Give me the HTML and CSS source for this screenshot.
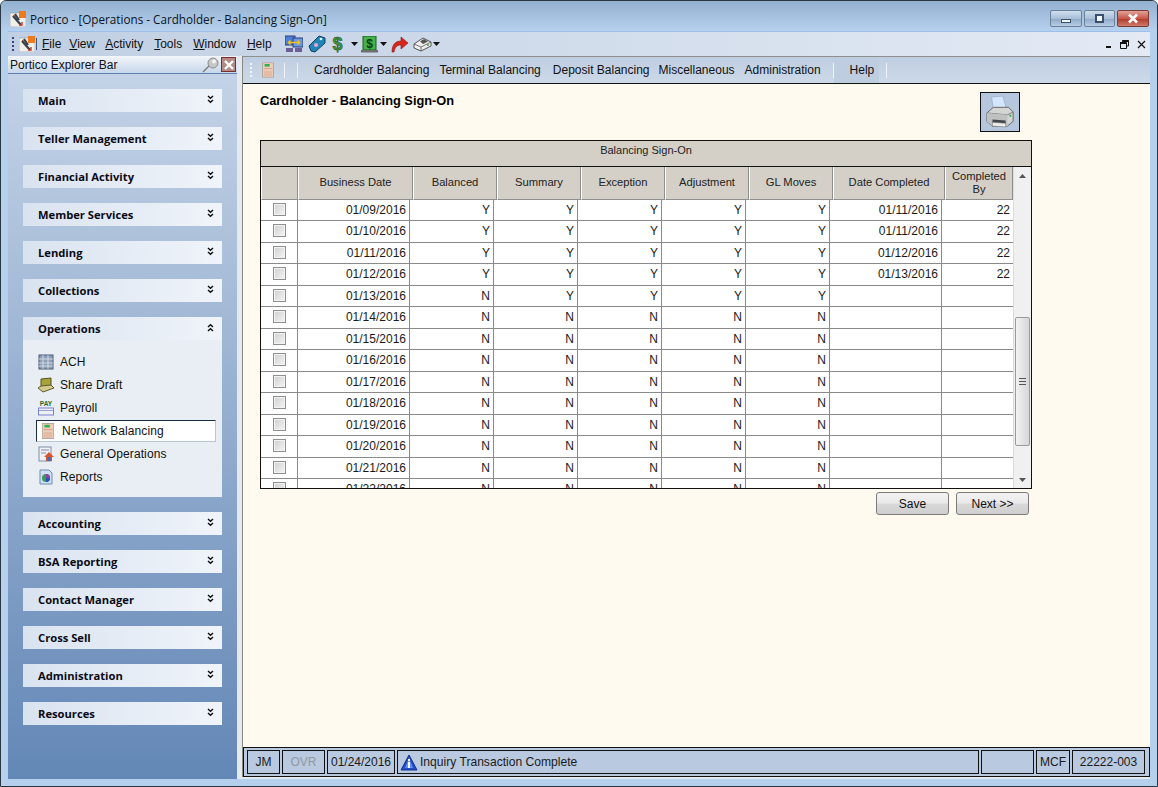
FILE: index.html
```html
<!DOCTYPE html>
<html lang="en">
<head>
<meta charset="utf-8">
<title>Portico</title>
<link rel="stylesheet" href="styles.css">
</head>
<body>
<svg class="defs" width="0" height="0" aria-hidden="true">
  <defs>
    <symbol id="logo" viewBox="0 0 16 16">
      <rect x="0" y="2" width="16" height="14" fill="#f2efe8"/>
      <rect x="0" y="2" width="16" height="14" fill="none" stroke="#8a97aa" stroke-width=".6"/>
      <rect x="9" y="0" width="7" height="7" fill="#f07a1a"/>
      <rect x="3" y="4" width="3" height="3" fill="#e9872c"/>
      <path d="M3 5 L11 14 M5 3 L9 9" stroke="#39404f" stroke-width="2.2" fill="none"/>
      <path d="M9 14 L12 14 L12 11" stroke="#c0392b" stroke-width="1.4" fill="none"/>
    </symbol>
    <symbol id="file" viewBox="0 0 14 18">
      <rect x=".5" y=".5" width="13" height="17" fill="#f0cdbb" stroke="#a9a39a"/>
      <rect x="3" y="2" width="6" height="3" fill="#2fb34a"/>
      <rect x="2" y="7" width="10" height="1" fill="#c99b87"/>
      <rect x="2" y="10" width="10" height="7" fill="#e6bba6"/>
    </symbol>
    <symbol id="printer" viewBox="0 0 32 36">
      <path d="M7 2 L19 1 L23 15 L9 16 Z" fill="#d4e6fb" stroke="#8fa8c8" stroke-width=".7"/>
      <path d="M2 19 L9 13 L25 13 L30 18 L30 28 L24 33 L8 33 L2 28 Z" fill="#d4d6d6" stroke="#555" stroke-width=".9"/>
      <path d="M2 19 L24 21 L30 18" fill="none" stroke="#777"/>
      <path d="M2 19 L24 21 L24 33 L8 33 L2 28 Z" fill="#bfc1c1"/>
      <path d="M8 26 L22 27 L22 31 L8 30 Z" fill="#44474a"/>
      <path d="M8 29 L22 30 L22 34 L8 33 Z" fill="#ededed" stroke="#666" stroke-width=".5"/>
      <rect x="26" y="21" width="2" height="2" fill="#38a84b"/>
    </symbol>
    <symbol id="caret" viewBox="0 0 7 4"><path d="M0 0 H7 L3.5 4 Z" fill="#111"/></symbol>
    <symbol id="chev-down" viewBox="0 0 7 9"><path d="M1 1 L3.5 3.2 L6 1 M1 5 L3.5 7.2 L6 5" fill="none" stroke="#111" stroke-width="1.5"/></symbol>
    <symbol id="chev-up" viewBox="0 0 7 9"><path d="M1 4 L3.5 1.8 L6 4 M1 8 L3.5 5.8 L6 8" fill="none" stroke="#111" stroke-width="1.5"/></symbol>
  </defs>
</svg>

<div class="window">
  <header class="titlebar">
    <svg class="logo-title"><use href="#logo"/></svg>
    <span class="title-text">Portico - [Operations - Cardholder - Balancing Sign-On]</span>
    <div class="caption-buttons">
      <span class="cap cap-min"><i></i></span>
      <span class="cap cap-max"><i></i></span>
      <span class="cap cap-close">
        <svg width="12" height="11" viewBox="0 0 12 11"><path d="M2 1.5 L10 9.5 M10 1.5 L2 9.5" stroke="#fff" stroke-width="2.6"/></svg>
      </span>
    </div>
  </header>

  <nav class="menubar">
    <span class="grip"></span>
    <svg class="logo-menu"><use href="#logo"/></svg>
    <span class="menu-sep"></span>
    <ul class="menu">
      <li><u>F</u>ile</li>
      <li><u>V</u>iew</li>
      <li><u>A</u>ctivity</li>
      <li><u>T</u>ools</li>
      <li><u>W</u>indow</li>
      <li><u>H</u>elp</li>
    </ul>
    <div class="tools">
      <svg class="tool tool-a" width="18" height="18" viewBox="0 0 18 18">
        <rect x="0" y="1" width="10" height="9" fill="#4f7fd6" stroke="#26407f"/>
        <rect x="8" y="3" width="10" height="9" fill="#6f97e0" stroke="#26407f"/>
        <path d="M3 7.5 H15 M3 7.5 L5.5 5.5 M3 7.5 L5.5 9.5 M15 7.5 L12.5 5.5 M15 7.5 L12.5 9.5" stroke="#f2c21c" stroke-width="1.6" fill="none"/>
        <rect x="1" y="13" width="7" height="4" fill="#6a5f96"/>
        <rect x="10" y="13" width="7" height="4" fill="#6a5f96"/>
      </svg>
      <svg class="tool tool-b" width="18" height="18" viewBox="0 0 18 18">
        <path d="M1 11 L11 1 L17 3 L17 8 L7 17 L3 16 Z" fill="#1f86b6" stroke="#123e60"/>
        <circle cx="8" cy="10" r="2" fill="#e9a3d4"/>
        <circle cx="13" cy="4" r="1.3" fill="#dff2fb"/>
      </svg>
      <span class="tool-dollar">$</span>
      <svg class="caret caret-a"><use href="#caret"/></svg>
      <svg class="tool tool-d" width="17" height="17" viewBox="0 0 17 17">
        <rect x="2" y="0" width="13" height="14" fill="#45b34a" stroke="#1f5a25"/>
        <rect x="0" y="14" width="17" height="2.5" fill="#6f6f6f"/>
        <text x="8.5" y="12" text-anchor="middle" class="svg-dollar">$</text>
      </svg>
      <svg class="caret caret-b"><use href="#caret"/></svg>
      <svg class="tool tool-e" width="17" height="17" viewBox="0 0 17 17">
        <path d="M1 16 C1 8 5 5 10 5 L10 1 L17 7 L10 13 L10 9 C6 9 4 11 3 16 Z" fill="#d8261c" stroke="#8c1410" stroke-width=".6"/>
      </svg>
      <svg class="tool tool-f" width="19" height="16" viewBox="0 0 19 16">
        <path d="M1 8 L10 2 L18 6 L18 10 L8 15 L1 12 Z" fill="#eeeeee" stroke="#555"/>
        <path d="M1 8 L8 11 L18 6 M8 11 L8 15" fill="none" stroke="#555" stroke-width=".8"/>
        <path d="M7 5.5 L11 3 L15 5.5 L10 8 Z" fill="#555"/>
        <circle cx="15" cy="9" r="1" fill="#3aa14a"/>
      </svg>
      <svg class="caret caret-c"><use href="#caret"/></svg>
    </div>
    <div class="mdi-controls">
      <span class="mdi-min"></span>
      <svg width="9" height="9" viewBox="0 0 9 9"><path d="M2.5 .5 H8.5 V6 H6.5 M.5 2.5 H6.5 V8.5 H.5 Z M2.5 .5 V2.5" fill="none" stroke="#111"/><rect x="2.5" y="0" width="6" height="2" fill="#111"/><rect x="0" y="2" width="6" height="2" fill="#111"/></svg>
      <svg width="9" height="9" viewBox="0 0 9 9"><path d="M1 1 L8 8 M8 1 L1 8" stroke="#111" stroke-width="1.2"/></svg>
    </div>
  </nav>

  <div class="workspace">
    <aside class="explorer">
      <div class="explorer-title">
        <span>Portico Explorer Bar</span>
        <svg class="pin" width="18" height="16" viewBox="0 0 18 16">
          <path d="M1 15 L7 9" stroke="#777" stroke-width="1.2"/>
          <circle cx="11" cy="6" r="5" fill="#c7c7c7" stroke="#8c8c8c"/>
          <circle cx="12" cy="4.5" r="2" fill="#f4f4f4"/>
        </svg>
        <span class="explorer-close">
          <svg width="12" height="10" viewBox="0 0 12 10"><path d="M2 1 L10 9 M10 1 L2 9" stroke="#fff" stroke-width="2.4"/></svg>
        </span>
      </div>
      <div class="groups">
        <section class="group"><h2>Main<svg class="chev"><use href="#chev-down"/></svg></h2></section>
        <section class="group"><h2>Teller Management<svg class="chev"><use href="#chev-down"/></svg></h2></section>
        <section class="group"><h2>Financial Activity<svg class="chev"><use href="#chev-down"/></svg></h2></section>
        <section class="group"><h2>Member Services<svg class="chev"><use href="#chev-down"/></svg></h2></section>
        <section class="group"><h2>Lending<svg class="chev"><use href="#chev-down"/></svg></h2></section>
        <section class="group"><h2>Collections<svg class="chev"><use href="#chev-down"/></svg></h2></section>
        <section class="group">
          <h2>Operations<svg class="chev"><use href="#chev-up"/></svg></h2>
          <ul class="group-items">
            <li>
              <svg class="item-icon" viewBox="0 0 16 16"><rect x="1" y="1" width="14" height="14" fill="#8da0b8" stroke="#4a5a70"/><path d="M1 5 H15 M1 9 H15 M1 12 H15 M5 1 V15 M10 1 V15" stroke="#dfe6ee" stroke-width=".8"/></svg>
              ACH
            </li>
            <li>
              <svg class="item-icon" viewBox="0 0 16 16"><path d="M3 2 L13 1 L13 9 L3 10 Z" fill="#a8a23a" stroke="#57531a"/><path d="M0 11 L3 9 L13 8 L16 11 L5 15 Z" fill="#d4c98e" stroke="#5f5a2e"/></svg>
              Share Draft
            </li>
            <li>
              <svg class="item-icon" viewBox="0 0 16 16"><text x="8" y="6" text-anchor="middle" class="svg-pay">PAY</text><rect x=".5" y="8" width="15" height="7" fill="#eef1fb" stroke="#7a80cc"/><rect x="1" y="10" width="14" height="1" fill="#9aa0de"/></svg>
              Payroll
            </li>
            <li class="is-active">
              <svg class="item-icon" viewBox="0 0 14 18"><use href="#file"/></svg>
              Network Balancing
            </li>
            <li>
              <svg class="item-icon" viewBox="0 0 16 16"><rect x="1" y="1" width="12" height="14" fill="#eef2f8" stroke="#7f8ea5"/><path d="M3 4 H11 M3 7 H8" stroke="#88a"/><path d="M6 11 L11 6 L16 11 L14 11 L14 15 L8 15 L8 11 Z" fill="#d8552c"/><rect x="9.5" y="11" width="3" height="4" fill="#3a6fc4"/></svg>
              General Operations
            </li>
            <li>
              <svg class="item-icon" viewBox="0 0 16 16"><path d="M2 1 H11 L14 4 V15 H2 Z" fill="#cfe0f4" stroke="#6f8db3"/><circle cx="8" cy="9" r="4" fill="#3a9a55"/><path d="M8 9 V5 A4 4 0 0 1 12 9 Z" fill="#8c3fa8"/><path d="M8 9 H12 A4 4 0 0 1 8 13 Z" fill="#2b4fb8"/></svg>
              Reports
            </li>
          </ul>
        </section>
        <section class="group"><h2>Accounting<svg class="chev"><use href="#chev-down"/></svg></h2></section>
        <section class="group"><h2>BSA Reporting<svg class="chev"><use href="#chev-down"/></svg></h2></section>
        <section class="group"><h2>Contact Manager<svg class="chev"><use href="#chev-down"/></svg></h2></section>
        <section class="group"><h2>Cross Sell<svg class="chev"><use href="#chev-down"/></svg></h2></section>
        <section class="group"><h2>Administration<svg class="chev"><use href="#chev-down"/></svg></h2></section>
        <section class="group"><h2>Resources<svg class="chev"><use href="#chev-down"/></svg></h2></section>
      </div>
    </aside>

    <main class="content">
      <div class="subbar">
        <span class="grip grip-light"></span>
        <svg class="sub-file" viewBox="0 0 14 18"><use href="#file"/></svg>
        <span class="sub-sep"></span>
        <span class="sub-sep sub-sep-b"></span>
        <ul class="submenu">
          <li>Cardholder Balancing</li>
          <li>Terminal Balancing</li>
          <li>Deposit Balancing</li>
          <li>Miscellaneous</li>
          <li>Administration</li>
        </ul>
        <span class="sub-sep sub-sep-c"></span>
        <span class="sub-help">Help</span>
        <span class="sub-sep sub-sep-d"></span>
      </div>

      <div class="page">
        <div class="page-head">
          <h1>Cardholder - Balancing Sign-On</h1>
          <button class="print" type="button" aria-label="Print"><svg width="30" height="34"><use href="#printer"/></svg></button>
        </div>

        <div class="grid-box">
          <div class="grid-caption">Balancing Sign-On</div>
          <div class="grid-main">
            <div class="grid-table">
              <div class="grid-head">
                <div></div><div>Business Date</div><div>Balanced</div><div>Summary</div><div>Exception</div><div>Adjustment</div><div>GL Moves</div><div>Date Completed</div><div>Completed By</div>
              </div>
              <div class="grid-body">
                <div class="row"><div class="c"><i class="check"></i></div><div>01/09/2016</div><div>Y</div><div>Y</div><div>Y</div><div>Y</div><div>Y</div><div>01/11/2016</div><div>22</div></div>
                <div class="row"><div class="c"><i class="check"></i></div><div>01/10/2016</div><div>Y</div><div>Y</div><div>Y</div><div>Y</div><div>Y</div><div>01/11/2016</div><div>22</div></div>
                <div class="row"><div class="c"><i class="check"></i></div><div>01/11/2016</div><div>Y</div><div>Y</div><div>Y</div><div>Y</div><div>Y</div><div>01/12/2016</div><div>22</div></div>
                <div class="row"><div class="c"><i class="check"></i></div><div>01/12/2016</div><div>Y</div><div>Y</div><div>Y</div><div>Y</div><div>Y</div><div>01/13/2016</div><div>22</div></div>
                <div class="row"><div class="c"><i class="check"></i></div><div>01/13/2016</div><div>N</div><div>Y</div><div>Y</div><div>Y</div><div>Y</div><div></div><div></div></div>
                <div class="row"><div class="c"><i class="check"></i></div><div>01/14/2016</div><div>N</div><div>N</div><div>N</div><div>N</div><div>N</div><div></div><div></div></div>
                <div class="row"><div class="c"><i class="check"></i></div><div>01/15/2016</div><div>N</div><div>N</div><div>N</div><div>N</div><div>N</div><div></div><div></div></div>
                <div class="row"><div class="c"><i class="check"></i></div><div>01/16/2016</div><div>N</div><div>N</div><div>N</div><div>N</div><div>N</div><div></div><div></div></div>
                <div class="row"><div class="c"><i class="check"></i></div><div>01/17/2016</div><div>N</div><div>N</div><div>N</div><div>N</div><div>N</div><div></div><div></div></div>
                <div class="row"><div class="c"><i class="check"></i></div><div>01/18/2016</div><div>N</div><div>N</div><div>N</div><div>N</div><div>N</div><div></div><div></div></div>
                <div class="row"><div class="c"><i class="check"></i></div><div>01/19/2016</div><div>N</div><div>N</div><div>N</div><div>N</div><div>N</div><div></div><div></div></div>
                <div class="row"><div class="c"><i class="check"></i></div><div>01/20/2016</div><div>N</div><div>N</div><div>N</div><div>N</div><div>N</div><div></div><div></div></div>
                <div class="row"><div class="c"><i class="check"></i></div><div>01/21/2016</div><div>N</div><div>N</div><div>N</div><div>N</div><div>N</div><div></div><div></div></div>
                <div class="row"><div class="c"><i class="check"></i></div><div>01/22/2016</div><div>N</div><div>N</div><div>N</div><div>N</div><div>N</div><div></div><div></div></div>
              </div>
            </div>
            <div class="scrollbar">
              <svg class="sb-arrow" width="7" height="4" viewBox="0 0 7 4"><path d="M0 4 H7 L3.5 0 Z" fill="#555"/></svg>
              <div class="sb-track"><div class="sb-thumb"><i></i></div></div>
              <svg class="sb-arrow" width="7" height="4" viewBox="0 0 7 4"><path d="M0 0 H7 L3.5 4 Z" fill="#555"/></svg>
            </div>
          </div>
        </div>

        <div class="actions">
          <button type="button">Save</button>
          <button type="button">Next &gt;&gt;</button>
        </div>
      </div>

      <footer class="status">
        <span class="st st-jm">JM</span>
        <span class="st st-ovr">OVR</span>
        <span class="st st-date">01/24/2016</span>
        <span class="st st-msg">
          <svg width="18" height="17" viewBox="0 0 18 17"><path d="M9 1 L17 16 H1 Z" fill="#2350c8" stroke="#16308c"/><path d="M9 4 L13 14 H5 Z" fill="#5f8ff0"/><rect x="8" y="5" width="2" height="2" fill="#fff"/><rect x="8" y="8" width="2" height="6" fill="#fff"/></svg>
          Inquiry Transaction Complete
        </span>
        <span class="st st-blank"></span>
        <span class="st st-mcf">MCF</span>
        <span class="st st-acct">22222-003</span>
      </footer>
    </main>
  </div>
</div>
</body>
</html>
```
FILE: styles.css
```css
* { box-sizing: border-box; }
html, body { margin: 0; padding: 0; width: 1158px; height: 787px; overflow: hidden; background: #fff; }
body { font: 12px "Liberation Sans", Arial, sans-serif; color: #111; }
.defs { position: absolute; }
ul { list-style: none; margin: 0; padding: 0; }
h1, h2 { margin: 0; }

.window {
  width: 1158px; height: 787px;
  display: flex; flex-direction: column;
  border: 1px solid #2a3642; border-radius: 6px 6px 0 0;
  background: #b4d0ec;
  padding: 0 7px 7px 7px;
}

/* title bar */
.titlebar {
  height: 30px; margin: 0 -7px; padding: 5px 7px 0 9px;
  display: flex; align-items: center;
  background: linear-gradient(#93b0cf, #b6d1ee);
  border-radius: 5px 5px 0 0;
  flex: none;
}
.logo-title { width: 16px; height: 16px; margin-right: 4px; }
.title-text { font: 11.7px "Open Sans", sans-serif; color: #0c1420; }
.caption-buttons { margin-left: auto; display: flex; gap: 2px; margin-right: 1px; }
.cap {
  width: 31px; height: 17px; display: flex; align-items: center; justify-content: center;
  border: 1px solid #6a8099; border-radius: 2px;
  background: linear-gradient(#cfdeee, #a8bfd8 50%, #8ea8c6 52%, #b7cde5);
}
.cap-min { width: 32px; }
.cap-close { width: 32px; border-color: #7a3b34; background: linear-gradient(#e2a197, #c8584a 50%, #b03a2b 52%, #d07a68); }
.cap-min i { display: block; width: 10px; height: 4px; margin-top: 5px; border: 1px solid #39506a; background: #f2f6fa; }
.cap-max i { display: block; width: 9px; height: 9px; border: 2px solid #39506a; background: #f2f6fa; }

/* menu */
.menubar {
  height: 25px; padding: 0 0 0 2px; flex: none;
  display: flex; align-items: center;
  background: linear-gradient(90deg, #c0cfe3, #e3eaf4);
  border-top: 1px solid #9cc0ec;
}
.grip { display: block; width: 2px; height: 14px; background: repeating-linear-gradient(#2e4a80 0 2px, transparent 2px 4px); margin-left: 2px; }
.logo-menu { width: 16px; height: 16px; margin-left: 5px; }
.menu-sep { width: 1px; height: 12px; background: #3a5a8a; margin: 0 5px 0 1px; }
.menu { display: flex; font-size: 12px; }
.menu li { margin-right: 11px; }
.menu li:nth-child(1) { margin-right: 8px; }
.menu li:nth-child(2) { margin-right: 10px; }
.tools { display: flex; align-items: center; margin-left: 2px; }
.tool-b { margin-left: 5px; }
.tool-dollar { font: bold 18px "Liberation Sans", sans-serif; color: #3e9a3a; -webkit-text-stroke: .5px #1d3d1d; margin-left: 7px; width: 13px; }
.caret { width: 7px; height: 4px; }
.caret-a { margin-left: 5px; }
.caret-b { margin-left: 2px; }
.caret-c { margin-left: 1px; }
.tool-d { margin-left: 3px; }
.tool-e { margin-left: 4px; }
.tool-f { margin-left: 5px; }
.svg-dollar { font: bold 12px "Liberation Sans", sans-serif; fill: #0c3b12; }
.svg-pay { font: bold 6.5px "Liberation Sans", sans-serif; fill: #1f6b2c; }
.mdi-controls { margin-left: auto; display: flex; align-items: center; gap: 8px; padding-right: 4px; }
.mdi-min { display: block; width: 5px; height: 2px; background: #111; margin: 6px 1px 0 0; }

/* workspace */
.workspace { flex: 1; display: flex; min-height: 0; gap: 6px; background: #e4e8ef; }

/* explorer */
.explorer { width: 229px; flex: none; display: flex; flex-direction: column; background: linear-gradient(#c6d5e8, #6387b6); }
.explorer-title {
  height: 18px; padding: 0 0 0 2px; flex: none;
  display: flex; align-items: center;
  background: linear-gradient(#f3f6fa, #c6d6ea);
  border-bottom: 1px solid #5f7fae;
  font: 12px "Liberation Sans", sans-serif;
}
.pin { margin-left: auto; margin-right: 1px; }
.explorer-close {
  width: 15px; height: 15px; margin-right: 1px;
  display: flex; align-items: center; justify-content: center;
  background: #b38a85; border: 1px solid #7a2f28;
}
.groups { padding: 15px 15px 0; display: flex; flex-direction: column; gap: 15px; }
.group h2 {
  height: 23px; padding: 0 8px 0 15px;
  display: flex; align-items: center; justify-content: space-between;
  font: bold 11.2px "Open Sans", sans-serif; color: #0a0a14;
  background: linear-gradient(90deg, #d9e3f0, #f0f4fa);
}
.chev { width: 7px; height: 9px; margin-top: -3px; }
.group-items { background: #e9eef4; height: 157px; padding: 11px 6px 0 13px; display: flex; flex-direction: column; gap: 1px; }
.group-items li { height: 22px; display: flex; align-items: center; gap: 6px; padding-left: 2px; font-size: 12px; letter-spacing: .1px; border: 1px solid transparent; border-left: none; border-right: none; }
.item-icon { width: 16px; height: 16px; flex: none; }
.group-items li.is-active {
  background: #fff; width: 180px;
  border: 1px solid; border-color: #1c2c44 #b8c6dc #b8c6dc #1c2c44;
  padding-left: 3px;
}

/* content */
.content { flex: 1; min-width: 0; display: flex; flex-direction: column; background: #fffaef; margin-bottom: 2px; border-left: 1px solid #8a8a80; margin-left: -1px; }
.subbar {
  height: 28px; flex: none; display: flex; align-items: center;
  background: linear-gradient(#bfcde0, #ccd9e9);
  border-top: 1px solid #8f8f8f; border-bottom: 1px solid #111;
  padding-left: 7px; font-size: 12px;
}
.grip-light { width: 2px; background: repeating-linear-gradient(#f2f5fa 0 2px, transparent 2px 4px); margin-left: 0; height: 15px; }
.sub-file { width: 12px; height: 16px; margin-left: 10px; }
.sub-sep { display: block; width: 1px; height: 15px; background: #f0f3f8; }
.sub-file + .sub-sep { margin-left: 10px; }
.sub-sep-b { margin-left: 12px; margin-right: 16px; }
.submenu { display: flex; gap: 11px; }
.submenu li:nth-child(2) { margin-left: -1px; }
.submenu li:nth-child(3) { margin-left: 1px; }
.submenu li:nth-child(4) { margin-left: -2px; }
.submenu li:nth-child(5) { margin-left: -1px; }
.sub-sep-c { margin-left: 12px; }
.sub-help { padding-left: 16px; height: 26px; line-height: 26px; background: #bfcde0; width: 45px; }
.sub-sep-d { margin-left: 7px; }

.page { flex: 1; min-height: 0; padding: 8px 0 0 17px; }
.page-head { height: 48px; display: flex; justify-content: space-between; align-items: flex-start; width: 760px; }
.page-head h1 { font: bold 12.8px "Liberation Sans", sans-serif; color: #000; margin-top: 1px; }
.print {
  width: 40px; height: 40px; padding: 0; border: 1px solid #111; background: #b6c7dd;
  display: flex; align-items: center; justify-content: center;
}

.grid-box { width: 772px; height: 349px; border: 1px solid #111; background: #fff; display: flex; flex-direction: column; overflow: hidden; }
.grid-caption { height: 26px; flex: none; background: #d4d0c8; border-bottom: 1px solid #111; text-align: center; line-height: 18px; font-size: 11px; color: #222; }
.grid-main { flex: 1; min-height: 0; display: flex; }
.grid-table { width: 752px; flex: none; display: flex; flex-direction: column; }
.grid-head {
  height: 32.5px; flex: none; display: grid;
  grid-template-columns: 37px 115px 84px 84px 84px 84px 84px 112px 68px;
}
.grid-head > div {
  background: #d4d0c8; border-left: 1px solid #fff; border-right: 1px solid #8f8f8f; border-bottom: 1px solid #8f8f8f;
  display: flex; align-items: center; justify-content: center; text-align: center;
  line-height: 13px; color: #222; padding: 0 4px; font-size: 11.2px;
}
.grid-body { flex: 1; min-height: 0; overflow: hidden; }
.row {
  height: 21.5px; display: grid;
  grid-template-columns: 37px 112px 84px 84px 84px 84px 84px 112px 71px;
  border-bottom: 1px solid #8a8a8a;
}
.row > div { border-right: 1px solid #8a8a8a; text-align: right; padding-right: 3px; line-height: 20px; color: #1a1a1a; }
.row > div:last-child { border-right: none; padding-right: 3px; }
.row > .c { padding: 3px 0 0 12px; text-align: left; line-height: 0; }
.check { display: block; width: 13px; height: 13px; border: 1px solid #8e8f8f; background: linear-gradient(135deg, #d0d0d0, #f4f4f4); box-shadow: inset 0 0 0 1px #f2f2f2; }

.scrollbar { flex: 1; background: #f0f0f0; border-left: 1px solid #dcdcdc; display: flex; flex-direction: column; align-items: center; }
.sb-arrow { flex: none; margin: 7px 0 6px; }
.sb-track { flex: 1; width: 100%; padding-top: 133px; }
.sb-thumb {
  width: 15px; height: 129px; margin: 0 auto; border: 1px solid #9a9a9a; border-radius: 2px;
  background: linear-gradient(90deg, #f2f2f2, #d6d6d6);
  display: flex; align-items: center; justify-content: center;
}
.sb-thumb i { display: block; width: 7px; height: 7px; background: repeating-linear-gradient(#555 0 1px, transparent 1px 3px); }

.actions { display: flex; justify-content: flex-end; gap: 7px; width: 769px; margin-top: 3px; }
.actions button {
  width: 73px; height: 23px; padding: 0; font: 12px "Liberation Sans", sans-serif; color: #111;
  border: 1px solid #7a7a7a; border-radius: 3px;
  background: linear-gradient(#f3f3f3, #e9e9e9 48%, #d8d8d8 52%, #cfcfcf);
}

/* status */
.status {
  height: 30px; flex: none; padding: 2px 4px 2px 3px;
  display: flex; gap: 2px;
  border: 1px solid #111;
  background: #b9c9df;
}
.st { border: 1px solid #111; display: flex; align-items: center; justify-content: center; color: #1a1a1a; background: #b9c9df; font-size: 12px; }
.st-jm { width: 33px; }
.st-ovr { width: 43px; color: #8f9aa8; }
.st-date { width: 68px; }
.st-msg { width: 582px; justify-content: flex-start; gap: 2px; padding-left: 2px; font-size: 12.1px; }
.st-blank { width: 53px; }
.st-mcf { width: 34px; }
.st-acct { width: 73px; }
```
